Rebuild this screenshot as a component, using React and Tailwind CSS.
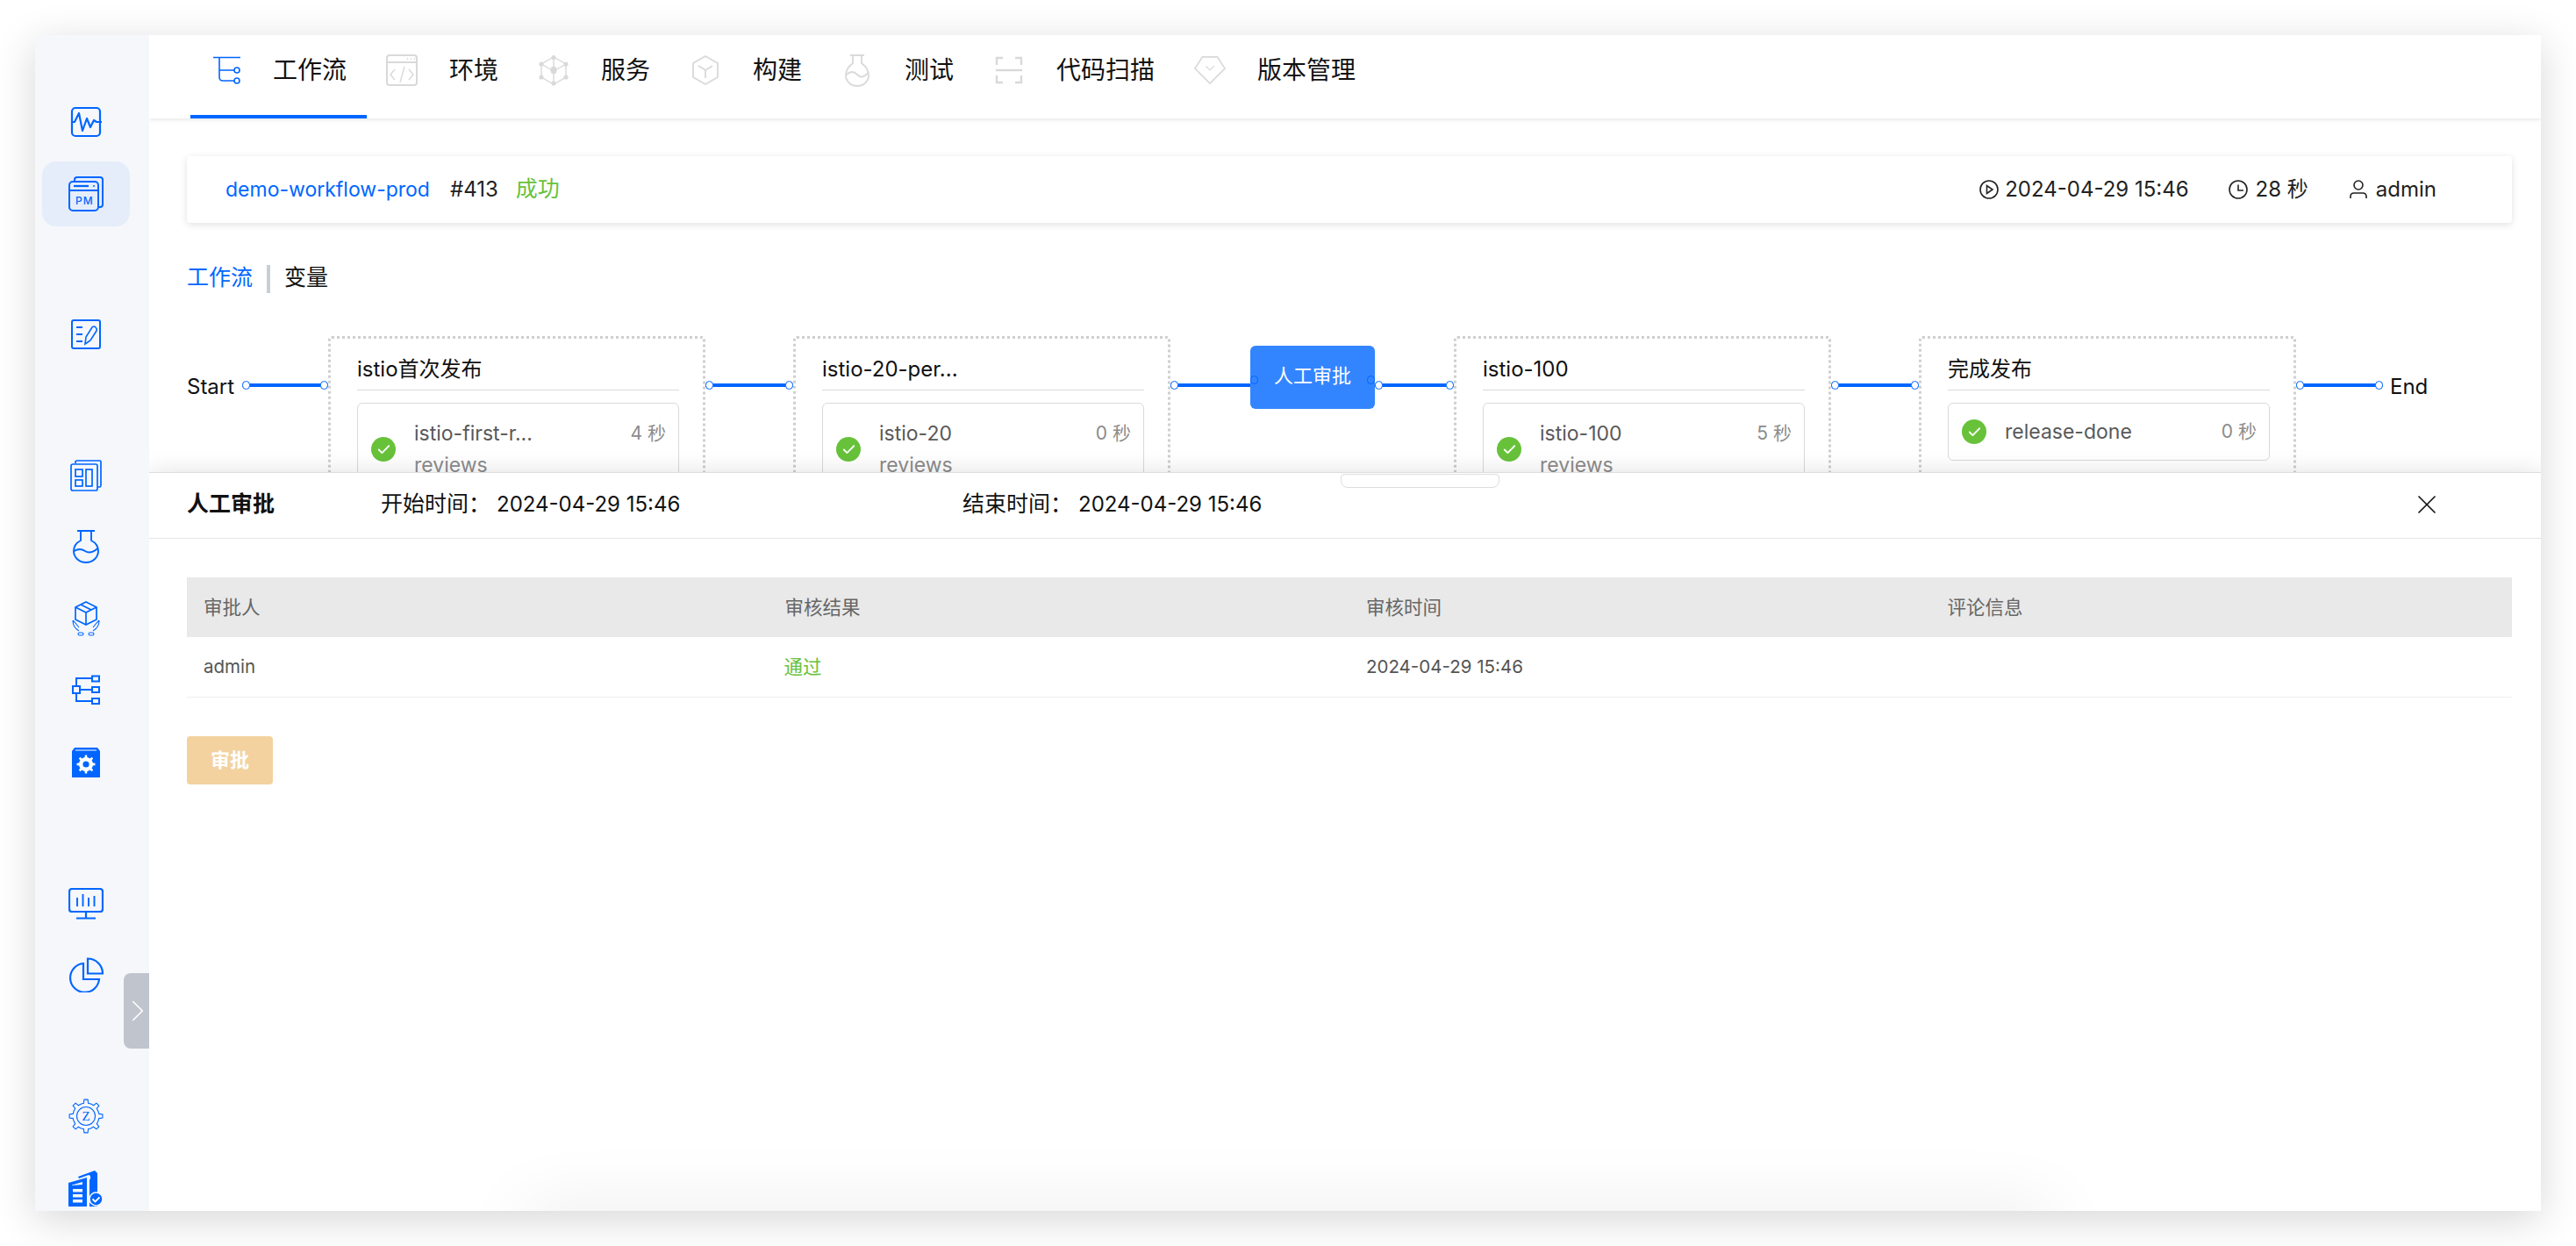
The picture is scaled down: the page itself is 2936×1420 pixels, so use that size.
import { Check, ChevronRight, X } from 'lucide-react'

function gearPath(cx, cy, teeth, outer, inner) {
  const pts = []
  const step = (Math.PI * 2) / teeth
  for (let i = 0; i < teeth; i++) {
    const a = i * step - Math.PI / 2
    const w = step * 0.2
    const pairs = [[a - step / 2 + w * 0.2, inner], [a - w * 1.1, inner], [a - w * 0.7, outer], [a + w * 0.7, outer], [a + w * 1.1, inner]]
    pairs.forEach(([t, r]) => pts.push(`${(cx + Math.cos(t) * r).toFixed(2)} ${(cy + Math.sin(t) * r).toFixed(2)}`))
  }
  return `M${pts.join('L')}Z`
}

const BLUE = '#0066ff'
const GRAY = '#d9d9d9'

function TabFlow() {
  return (
    <svg width="36" height="36" viewBox="0 0 36 36" fill="none" stroke={BLUE} strokeWidth="1.6">
      <path d="M4 3.5h31M11 3.5V26q0 4 4 4h13M11 18h17" />
      <circle cx="31" cy="18" r="3" />
      <circle cx="31" cy="30" r="3" />
    </svg>
  )
}

function TabCode() {
  return (
    <svg width="36" height="36" viewBox="0 0 36 36" fill="none" stroke={GRAY} strokeWidth="2">
      <rect x="1" y="1" width="34" height="34" rx="3" />
      <path d="M1 9h34" />
      <path d="M24 5h1M28 5h1M32 5h1" />
      <path d="M10 17l-5 6 5 6M26 17l5 6-5 6M21 14l-5 18" strokeWidth="1.4" />
    </svg>
  )
}

function TabService() {
  return (
    <svg width="36" height="36" viewBox="0 0 36 36" fill="none" stroke={GRAY} strokeWidth="1.4">
      <path d="M18 3L32 11V26L18 34L4 26V11ZM18 3V34M4 11L18 19L32 11" />
      <g fill={GRAY} stroke="none">
        <circle cx="18" cy="3.5" r="2.6" />
        <circle cx="32" cy="11" r="2.6" />
        <circle cx="32" cy="26" r="2.6" />
        <circle cx="18" cy="33" r="2.6" />
        <circle cx="4" cy="26" r="2.6" />
        <circle cx="4" cy="11" r="2.6" />
        <ellipse cx="18" cy="18" rx="3.6" ry="4.2" />
      </g>
    </svg>
  )
}

function TabBuild() {
  return (
    <svg width="36" height="36" viewBox="0 0 36 36" fill="none" stroke={GRAY} strokeWidth="1.8">
      <path d="M18 2L32 10V26L18 34L4 26V10Z" />
      <path d="M10 13L18 18L26 13M18 18V27" />
    </svg>
  )
}

function TabFlask() {
  return (
    <svg width="36" height="38" viewBox="0 0 36 38" fill="none" stroke={GRAY} strokeWidth="1.8">
      <path d="M10 2h16M13 2v9Q5 17 5 25a13 12 0 0 0 26 0Q31 17 23 11V2" />
      <path d="M6 24Q12 18 18 24T30 22" />
    </svg>
  )
}

function TabScan() {
  return (
    <svg width="36" height="36" viewBox="0 0 36 36" fill="none" stroke={GRAY} strokeWidth="2.4">
      <path d="M4 12V4h7M25 4h7v8M4 24v8h7M25 32h7v-8" />
      <path d="M3 18h30" />
    </svg>
  )
}

function TabDiamond() {
  return (
    <svg width="38" height="36" viewBox="0 0 38 36" fill="none" stroke={GRAY} strokeWidth="1.8">
      <path d="M10 2h18l9 14-18 18L1 16Z" />
      <path d="M14 13l5 5 5-5" strokeWidth="1.2" />
    </svg>
  )
}

function NavPulse() {
  return (
    <svg width="36" height="36" viewBox="0 0 36 36" fill="none" stroke={BLUE} strokeWidth="2.2">
      <rect x="2" y="2" width="32" height="32" rx="4" />
      <path d="M2 18h3l5-10 4 20 5-14 4 10 4-8 3 2h6" strokeLinejoin="round" />
    </svg>
  )
}

function NavPm() {
  return (
    <svg width="40" height="40" viewBox="0 0 40 40" fill="none" stroke={BLUE} strokeWidth="2">
      <path d="M7 5V3.5Q7 1 10 1h26q3 0 3 3v28q0 3-3 3h-2" />
      <rect x="1" y="6" width="33" height="33" rx="4" />
      <path d="M1 16h33" />
      <path d="M6 11h17" strokeWidth="2.2" />
      <circle cx="29" cy="11" r="1" fill={BLUE} stroke="none" />
      <text x="8" y="32" fill={BLUE} stroke="none" fontSize="12" fontWeight="500" letterSpacing="1" fontFamily="Inter, sans-serif">PM</text>
    </svg>
  )
}

function NavNotes() {
  return (
    <svg width="36" height="36" viewBox="0 0 36 36" fill="none" stroke={BLUE} strokeWidth="2">
      <rect x="2" y="2" width="32" height="32" rx="2" />
      <path d="M7 10h7M7 18h7M7 26h7" />
      <path d="M17 29l1-8 7-11q2-2 4 0t1 4l-7 11Z" strokeWidth="1.6" />
    </svg>
  )
}

function NavBoard() {
  return (
    <svg width="36" height="36" viewBox="0 0 36 36" fill="none" stroke={BLUE} strokeWidth="1.7">
      <path d="M6 4V2.5Q6 1 8 1h26q1 0 1 1.5V29q0 1-1 2h-3" />
      <rect x="1" y="5" width="30" height="30" rx="2" />
      <rect x="6" y="11" width="8" height="8" />
      <rect x="6" y="23" width="8" height="7" />
      <rect x="18" y="11" width="7" height="19" />
    </svg>
  )
}

function NavFlask() {
  return (
    <svg width="30" height="38" viewBox="0 0 30 38" fill="none" stroke={BLUE} strokeWidth="1.9">
      <path d="M5 1h20M9 1v11Q1 16 1 24a14 13 0 0 0 28 0Q29 16 21 12V1" />
      <path d="M1.5 24Q8 20 14 24T28.5 21" />
    </svg>
  )
}

function NavBox() {
  return (
    <svg width="32" height="40" viewBox="0 0 32 40" fill="none" stroke={BLUE} strokeWidth="1.7">
      <path d="M16 1l12 6v14l-12 6-12-6V7Z" />
      <path d="M4 7l12 6 12-6M16 13v14M10 4l12 6" />
      <path d="M1 22q0 8 7 12M31 22q0 8-7 12M1 22l3 3 4 5M31 22l-3 3-4 5" strokeWidth="1.1" />
      <rect x="7" y="36" width="6" height="3" rx="1.5" strokeWidth="1.1" />
      <rect x="19" y="36" width="6" height="3" rx="1.5" strokeWidth="1.1" />
    </svg>
  )
}

function NavTree() {
  return (
    <svg width="32" height="34" viewBox="0 0 32 34" fill="none" stroke={BLUE} strokeWidth="2">
      <rect x="1" y="13" width="8" height="8" />
      <path d="M5 13V4h18M5 21v9h18M9 17h14" />
      <rect x="23" y="1.5" width="8" height="6" />
      <rect x="23" y="14" width="8" height="6" />
      <rect x="23" y="27" width="8" height="6" />
    </svg>
  )
}

function NavGearBox() {
  return (
    <svg width="32" height="34" viewBox="0 0 32 34">
      <path d="M3 0h26l3 4v30H0V4Z" fill={BLUE} />
      <path d="M4 3h24" stroke="#fff" strokeWidth="1" />
      <path d={gearPath(16, 19, 8, 10.5, 8)} fill="#fff" />
      <circle cx="16" cy="19" r="3.6" fill={BLUE} />
    </svg>
  )
}

function NavMonitor() {
  return (
    <svg width="40" height="36" viewBox="0 0 40 36" fill="none" stroke={BLUE} strokeWidth="2.2">
      <rect x="1" y="1" width="38" height="26" rx="3" />
      <path d="M20 27v7M9 34.5h22" />
      <path d="M10 11v10M16.5 7v14M23 11v10M29.5 9v12" strokeWidth="1.9" />
    </svg>
  )
}

function NavPie() {
  return (
    <svg width="40" height="40" viewBox="0 0 40 40" fill="none" stroke={BLUE} strokeWidth="2.2">
      <path d="M17 7A16.5 16.5 0 1 0 35 25H17Z" />
      <path d="M22 1.5A17 17 0 0 1 39 18.5H22Z" />
    </svg>
  )
}

function NavGearZ() {
  return (
    <svg width="40" height="40" viewBox="0 0 40 40" fill="none" stroke={BLUE} strokeWidth="1.1">
      <path d={gearPath(20, 20, 8, 19, 15)} />
      <circle cx="20" cy="20" r="10.5" />
      <text x="20" y="25" textAnchor="middle" fill={BLUE} stroke="none" fontSize="15" fontFamily="'Liberation Serif', serif">Z</text>
    </svg>
  )
}

function NavBuilding() {
  return (
    <svg width="40" height="41" viewBox="0 0 40 41">
      <path d="M0 14L21 8V41H0ZM4 17v-.5L16 13v3ZM5 21h11v3.500H5ZM5 27h11v3.500H5ZM5 33h11v3.500H5Z" fill={BLUE} fillRule="evenodd" />
      <path d="M11 7L30 0L33 3V26H25V6L23 5L12 9Z" fill={BLUE} />
      <path d="M24 10h9v31H24Z" fill={BLUE} />
      <circle cx="31.500" cy="32.500" r="7.500" fill={BLUE} stroke="#f5f7fb" strokeWidth="1.500" />
      <path d="M27.500 32.500l3 3 5-5" fill="none" stroke="#fff" strokeWidth="1.800" />
    </svg>
  )
}

function PlayIcon() {
  return (
    <svg width="24" height="24" viewBox="0 0 24 24" fill="none" stroke="#222" strokeWidth="1.6">
      <circle cx="12" cy="12" r="10" />
      <path d="M9.500 7.500v9l6.500-4.500Z" />
    </svg>
  )
}

function ClockIcon() {
  return (
    <svg width="24" height="24" viewBox="0 0 24 24" fill="none" stroke="#222" strokeWidth="1.6">
      <circle cx="12" cy="12" r="10" />
      <path d="M12 6.500V13h6" />
    </svg>
  )
}

function UserIcon() {
  return (
    <svg width="24" height="24" viewBox="0 0 24 24" fill="none" stroke="#222" strokeWidth="1.6">
      <circle cx="12" cy="7" r="5" />
      <path d="M3 22v-2q0-4 4-4h10q4 0 4 4v2" />
    </svg>
  )
}

const tabs = [
  { label: '工作流', icon: <TabFlow />, active: true },
  { label: '环境', icon: <TabCode /> },
  { label: '服务', icon: <TabService /> },
  { label: '构建', icon: <TabBuild /> },
  { label: '测试', icon: <TabFlask /> },
  { label: '代码扫描', icon: <TabScan /> },
  { label: '版本管理', icon: <TabDiamond /> },
]

function Dot({ className = '' }) {
  return <span className={`absolute top-1/2 h-[10px] w-[9px] -translate-y-1/2 rounded-full border-[1.5px] border-[#0066ff] bg-white ${className}`} />
}

function Connector({ width, end = true }) {
  return (
    <div className={`relative mt-[54px] h-[4px] flex-none bg-[#0066ff] ${width}`}>
      <Dot className="left-0" />
      {end && <Dot className="right-0" />}
    </div>
  )
}

function Job({ name, time, sub }) {
  return (
    <div className="mt-[14px] rounded-md border border-[#d9d9d9] pl-[15px] pr-[14px] py-[14px]">
      <div className={`flex items-center ${sub ? 'pt-[2px]' : ''}`}>
        <span className="flex h-[28px] w-[28px] flex-none items-center justify-center rounded-full bg-[#67c23a]">
          <Check size={17} color="#fff" strokeWidth={2.6} />
        </span>
        <div className="ml-[21px] min-w-0 flex-1">
          <div className="flex items-center justify-between leading-[36px]">
            <span className="text-[23px] text-[#595959]">{name}</span>
            <span className="text-[21px] text-[#8c8c8c]">{time}</span>
          </div>
          {sub && <div className="text-[23px] leading-[36px] text-[#8c8c8c]">{sub}</div>}
        </div>
      </div>
    </div>
  )
}

function Stage({ title, job }) {
  return (
    <div className="h-[300px] w-[430px] flex-none rounded border-[3px] border-dotted border-[#cfcfcf] pl-[30px] pr-[27px]">
      <div className="flex h-[59px] items-end border-b border-[#d9d9d9] pb-[11px] text-[24px] leading-[24px] text-[#111]">{title}</div>
      <Job {...job} />
    </div>
  )
}

function Sidebar() {
  return (
    <aside className="relative flex w-[130px] flex-none flex-col items-center bg-[#f5f7fb] pr-[14px]">
      <div className="mt-[82px] flex h-[34px] items-center justify-center"><NavPulse /></div>
      <div className="mt-[28px] flex h-[74px] w-[100px] items-center justify-center rounded-2xl bg-[#e5edfa]"><NavPm /></div>
      <div className="mt-[105px]"><NavNotes /></div>
      <div className="mt-[125px]"><NavBoard /></div>
      <div className="mt-[44px]"><NavFlask /></div>
      <div className="mt-[43px]"><NavBox /></div>
      <div className="mt-[44px]"><NavTree /></div>
      <div className="mt-[49px]"><NavGearBox /></div>
      <div className="mt-[126px]"><NavMonitor /></div>
      <div className="mt-[43px]"><NavPie /></div>
      <div className="mt-[121px]"><NavGearZ /></div>
      <div className="mt-[42px]"><NavBuilding /></div>
      <div className="absolute right-0 top-[1069px] z-30 flex h-[86px] w-[29px] items-center justify-center rounded-l-lg bg-[#c0c4cc] pl-[2px]">
        <ChevronRight size={42} color="#fff" strokeWidth={1} className="flex-none" />
      </div>
    </aside>
  )
}

function Header() {
  return (
    <header className="relative z-10 flex h-[95px] flex-none bg-white pl-[47px] shadow-[0_1px_5px_rgba(0,0,0,0.12)]">
      {tabs.map((t) => (
        <div key={t.label} className={`flex h-full items-center gap-[36px] pl-[22px] pr-[23px] ${t.active ? 'border-b-4 border-[#0066ff] pb-[12px]' : 'pb-[16px]'}`}>
          <span className="flex h-[36px] w-[36px] items-center justify-center">{t.icon}</span>
          <span className="text-[28px] text-[#111]">{t.label}</span>
        </div>
      ))}
    </header>
  )
}

function Summary() {
  return (
    <div className="flex h-[76px] items-center justify-between rounded-sm bg-white px-[44px] text-[24px] shadow-[0_2px_8px_rgba(0,0,0,0.12)]">
      <div className="flex items-center">
        <span className="text-[23px] text-[#0066ff]">demo-workflow-prod</span>
        <span className="ml-[23px] text-[#222]">#413</span>
        <span className="ml-[20px] text-[25px] text-[#67c23a]">成功</span>
      </div>
      <div className="flex items-center pr-[42px] text-[#222]">
        <PlayIcon />
        <span className="ml-[6px]">2024-04-29 15:46</span>
        <span className="ml-[44px]"><ClockIcon /></span>
        <span className="ml-[8px]">28 秒</span>
        <span className="ml-[45px]"><UserIcon /></span>
        <span className="ml-[8px]">admin</span>
      </div>
    </div>
  )
}

function Flow() {
  return (
    <div className="mt-[49px] flex items-start">
      <span className="mt-[40px] w-[63px] flex-none text-[24px] leading-[36px] text-[#111]">Start</span>
      <Connector width="w-[98px]" />
      <Stage title="istio首次发布" job={{ name: 'istio-first-r...', time: '4 秒', sub: 'reviews' }} />
      <Connector width="w-[100px]" />
      <Stage title="istio-20-per..." job={{ name: 'istio-20', time: '0 秒', sub: 'reviews' }} />
      <Connector width="w-[91px]" end={false} />
      <div className="relative mt-[11px] flex h-[72px] w-[142px] flex-none items-center justify-center rounded-md bg-[#3385ff] pb-[4px] text-[22px] text-white">
        人工审批
        <span className="absolute left-0 top-[34px] h-[10px] w-[9px] rounded-full border-[1.5px] border-[#0066ff]" />
        <span className="absolute right-0 top-[34px] h-[10px] w-[9px] rounded-full border-[1.5px] border-[#0066ff]" />
      </div>
      <Connector width="w-[90px]" />
      <Stage title="istio-100" job={{ name: 'istio-100', time: '5 秒', sub: 'reviews' }} />
      <Connector width="w-[100px]" />
      <Stage title="完成发布" job={{ name: 'release-done', time: '0 秒' }} />
      <Connector width="w-[99px]" />
      <span className="ml-[8px] mt-[40px] flex-none text-[24px] leading-[36px] text-[#111]">End</span>
    </div>
  )
}

function ApprovalPanel() {
  return (
    <section className="relative z-20 flex-1 border-t border-[#dddddd] bg-white shadow-[0_0_26px_rgba(0,0,0,0.12)]">
      <div className="absolute left-[1358px] top-[1px] h-[16px] w-[181px] rounded-b-lg rounded-t-sm border border-[#dddddd] bg-white" />
      <div className="flex h-[75px] items-center border-b border-[#e4e4e4] pb-[2px] pl-[43px] pr-[112px] text-[24px] text-[#111]">
        <span className="w-[221px] text-[25px] font-bold">人工审批</span>
        <span className="w-[663px]"><span className="text-[25px]">开始时间：</span><span className="ml-[7px]">2024-04-29 15:46</span></span>
        <span className="flex-1"><span className="text-[25px]">结束时间：</span><span className="ml-[7px]">2024-04-29 15:46</span></span>
        <X size={36} color="#111" strokeWidth={1.1} />
      </div>
      <div className="pl-[43px] pr-[33px] pt-[44px]">
        <div className="grid h-[68px] grid-cols-4 items-center bg-[#e9e9e9] text-[21.5px] text-[#666]">
          {['审批人', '审核结果', '审核时间', '评论信息'].map((h) => (
            <span key={h} className="pl-[19px]">{h}</span>
          ))}
        </div>
        <div className="grid h-[69px] grid-cols-4 items-center border-b border-[#eeeeee] text-[20.5px] text-[#555]">
          <span className="pl-[19px]">admin</span>
          <span className="pl-[18px] text-[21.5px] text-[#67c23a]">通过</span>
          <span className="pl-[19px]">2024-04-29 15:46</span>
          <span />
        </div>
        <button type="button" className="mt-[44px] flex h-[55px] w-[98px] items-center justify-center rounded bg-[#f3d29f] text-[22px] font-bold text-white">审批</button>
      </div>
      <div className="absolute -bottom-[40px] left-[430px] right-[560px] h-[40px] shadow-[0_0_80px_rgba(0,0,0,0.1)]" />
    </section>
  )
}

export default function App() {
  return (
    <div className="h-[1420px] w-[2936px] overflow-hidden bg-white p-[40px] font-['Inter','Noto_Sans_CJK_SC',sans-serif]">
      <div className="flex h-[1340px] w-[2856px] bg-white shadow-[0_10px_44px_rgba(0,0,0,0.16)]">
        <Sidebar />
        <main className="relative flex min-w-0 flex-1 flex-col overflow-hidden bg-white">
          <Header />
          <div className="h-[403px] flex-none overflow-hidden pl-[43px] pr-[33px] pt-[43px]">
            <Summary />
            <div className="mt-[48px] flex h-[32px] items-center pb-[2px] text-[25px]">
              <span className="text-[#0066ff]">工作流</span>
              <span className="mx-[16px] mt-[2px] h-[32px] w-[4px] bg-[#c9cdd4]" />
              <span className="text-[#111]">变量</span>
            </div>
            <Flow />
          </div>
          <ApprovalPanel />
        </main>
      </div>
    </div>
  )
}
